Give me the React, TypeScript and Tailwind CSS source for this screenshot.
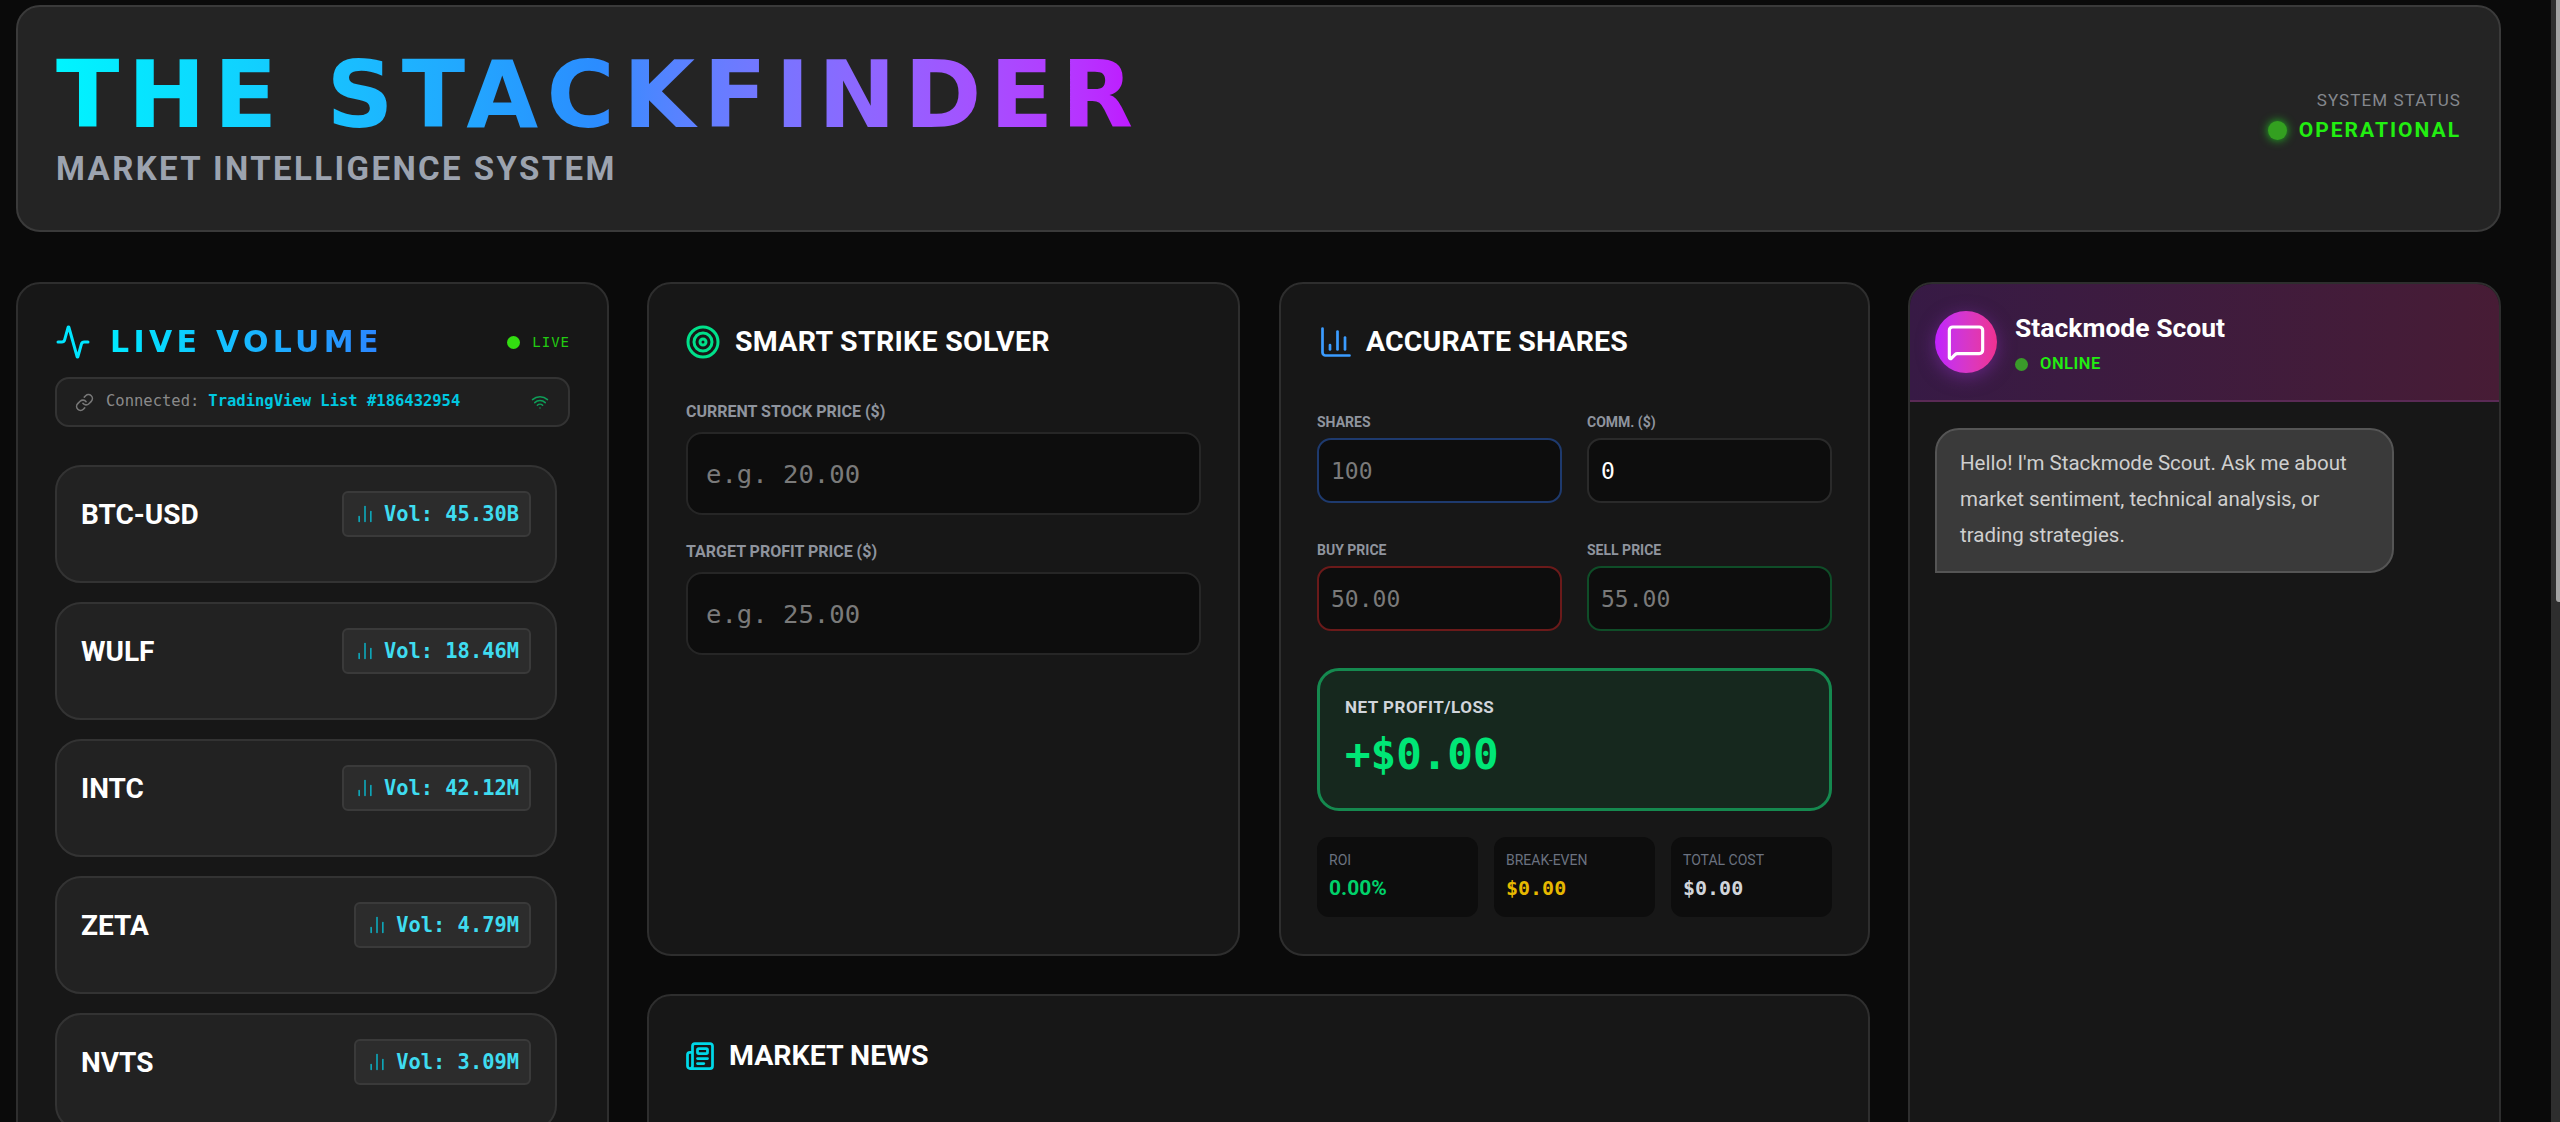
import { Activity, ChartColumn, ChartNoAxesColumn, Link, MessageSquare, Newspaper, Target, Wifi } from "lucide-react";

const stocks = [
  { symbol: "BTC-USD", vol: "45.30B" },
  { symbol: "WULF", vol: "18.46M" },
  { symbol: "INTC", vol: "42.12M" },
  { symbol: "ZETA", vol: "4.79M" },
  { symbol: "NVTS", vol: "3.09M" },
];

const sans = "font-['Roboto',sans-serif]";
const mono = "font-['DejaVu_Sans_Mono',monospace]";
const wide = "font-['DejaVu_Sans',sans-serif]";

function Field({ label, placeholder, value, border }: { label: string; placeholder?: string; value?: string; border: string }) {
  return (
    <div>
      <label className={`${sans} block text-[14px] leading-[17px] font-bold text-[#8f949e] mb-[7px]`}>{label}</label>
      <input
        readOnly
        placeholder={placeholder}
        value={value ?? ""}
        className={`${mono} w-full h-[65px] px-[12px] rounded-[14px] bg-[#0d0d0d] border-2 ${border} text-[23px] text-white placeholder:text-[#7a7a7a] outline-none`}
      />
    </div>
  );
}

function Stat({ label, value, color, font }: { label: string; value: string; color: string; font: string }) {
  return (
    <div className="rounded-[12px] bg-[#0d0d0d] px-[12px] pt-[14px] h-[80px]">
      <div className={`${sans} text-[14px] leading-[18px] text-[#6b7280]`}>{label}</div>
      <div className={`${font} mt-[7px] ${font === sans ? "text-[21px]" : "text-[20px]"} leading-[24px] font-bold ${color}`}>{value}</div>
    </div>
  );
}

export default function App() {
  return (
    <div className="flex h-screen overflow-hidden bg-[#0a0a0a]">
      <div className="flex-1 pl-[16px] pr-[50px] pt-[5px]">
        <header className="h-[227px] rounded-[24px] bg-[#242424] border-2 border-[#3a3a3a] pl-[38px] pr-[38px] pt-[33px] flex justify-between">
          <div>
            <h1 className={`${wide} text-[93px] leading-[110px] font-bold tracking-[8.3px] text-transparent bg-clip-text bg-gradient-to-r from-[#00f5ff] via-[#2b8cff] to-[#c010ff]`}>
              THE STACKFINDER
            </h1>
            <p className={`${sans} mt-[0px] text-[33px] leading-[38px] font-bold tracking-[2.4px] text-[#9ca3af]`}>MARKET INTELLIGENCE SYSTEM</p>
          </div>
          <div className="pt-[49px] text-right">
            <div className={`${sans} text-[17px] leading-[22px] tracking-[1.1px] text-[#85888e]`}>SYSTEM STATUS</div>
            <div className="mt-[7px] flex items-center justify-end gap-[12px]">
              <span className="w-[19px] h-[19px] rounded-full bg-[#33a020] shadow-[0_0_10px_#22c522]" />
              <span className={`${sans} text-[21px] leading-[24px] font-bold tracking-[2px] text-[#22ee11]`}>OPERATIONAL</span>
            </div>
          </div>
        </header>

        <div className="mt-[50px] grid grid-cols-[593px_1223px_593px] gap-[38px] items-start">
          <section className="rounded-[24px] bg-[#171717] border-2 border-[#2e2e2e] pl-[37px] pr-[37px] pt-[40px] h-[900px]">
            <div className="flex items-center justify-between h-[36px]">
              <div className="flex items-center gap-[19px]">
                <Activity size={36} strokeWidth={2} className="text-[#00e5ff]" />
                <h2 className={`${wide} text-[30px] leading-[36px] font-bold tracking-[4.3px] text-transparent bg-clip-text bg-gradient-to-r from-[#00eaff] to-[#2b84ff]`}>LIVE VOLUME</h2>
              </div>
              <div className="flex items-center gap-[12px]">
                <span className="w-[13px] h-[13px] rounded-full bg-[#33dd11]" />
                <span className={`${mono} text-[14px] tracking-[1px] text-[#22cc11]`}>LIVE</span>
              </div>
            </div>
            <div className={`${mono} mt-[17px] flex items-center h-[50px] rounded-[14px] bg-[#1f1f1f] border-2 border-[#333] pl-[18px] pr-[19px] text-[15.5px]`}>
              <Link size={19} className="text-[#777]" />
              <span className="ml-[12px] text-[#8a8a8a]">Connected:</span>
              <span className="ml-[9px] font-bold text-[#00c8e0]">TradingView List #186432954</span>
              <Wifi size={18} className="ml-auto text-[#0f9d58]" />
            </div>
            <div className="mt-[38px] mr-[13px] flex flex-col gap-[19px]">
              {stocks.map((s) => (
                <div key={s.symbol} className="h-[118px] rounded-[26px] bg-[#222] border-2 border-[#333] pl-[24px] pr-[24px] pt-[24px] flex items-start justify-between">
                  <span className={`${sans} text-[28px] leading-[48px] font-bold text-white`}>{s.symbol}</span>
                  <span className={`${mono} flex items-center h-[46px] rounded-[6px] bg-[#2c2c2c] border-2 border-[#3a3a3a] pl-[11px] pr-[10px] text-[20.4px] font-bold text-[#3fdcf0]`}>
                    <ChartNoAxesColumn size={20} className="text-[#0ea5b7] mr-[9px]" />
                    Vol: {s.vol}
                  </span>
                </div>
              ))}
            </div>
          </section>

          <div className="flex flex-col gap-[38px]">
            <div className="grid grid-cols-[593px_591px] gap-[39px]">
              <section className="h-[674px] rounded-[24px] bg-[#171717] border-2 border-[#2e2e2e] px-[37px] pt-[40px]">
                <div className="flex items-center gap-[14px] h-[36px]">
                  <Target size={36} strokeWidth={2} className="text-[#00e08a] -ml-[1px]" />
                  <h2 className={`${sans} text-[28.5px] font-bold tracking-[0.3px] text-white`}>SMART STRIKE SOLVER</h2>
                </div>
                <label className={`${sans} mt-[42px] block text-[16px] leading-[20px] font-bold text-[#8f949e]`}>CURRENT STOCK PRICE ($)</label>
                <input readOnly placeholder="e.g. 20.00" className={`${mono} mt-[10px] w-full h-[83px] px-[18px] rounded-[16px] bg-[#0d0d0d] border-2 border-[#262626] text-[25.6px] placeholder:text-[#7a7a7a] outline-none`} />
                <label className={`${sans} mt-[27px] block text-[16px] leading-[20px] font-bold text-[#8f949e]`}>TARGET PROFIT PRICE ($)</label>
                <input readOnly placeholder="e.g. 25.00" className={`${mono} mt-[10px] w-full h-[83px] px-[18px] rounded-[16px] bg-[#0d0d0d] border-2 border-[#262626] text-[25.6px] placeholder:text-[#7a7a7a] outline-none`} />
              </section>

              <section className="h-[674px] rounded-[24px] bg-[#171717] border-2 border-[#2e2e2e] px-[36px] pt-[40px]">
                <div className="flex items-center gap-[12px] h-[36px] ml-[2px]">
                  <ChartColumn size={36} strokeWidth={1.8} className="text-[#3b9cff] -ml-[1px]" />
                  <h2 className={`${sans} text-[28.5px] font-bold tracking-[0.1px] text-white`}>ACCURATE SHARES</h2>
                </div>
                <div className="mt-[54px] grid grid-cols-2 gap-x-[25px] gap-y-[39px]">
                  <Field label="SHARES" placeholder="100" border="border-[#1e3a6e]" />
                  <Field label="COMM. ($)" value="0" border="border-[#2a2a2a]" />
                  <Field label="BUY PRICE" placeholder="50.00" border="border-[#6b1a1a]" />
                  <Field label="SELL PRICE" placeholder="55.00" border="border-[#0f4d28]" />
                </div>
                <div className="mt-[37px] h-[143px] rounded-[22px] bg-[#16281e] border-[3px] border-[#15894f] pl-[25px] pt-[26px]">
                  <div className={`${sans} text-[17px] leading-[20px] font-bold tracking-[0.5px] text-[#d1d5db]`}>NET PROFIT/LOSS</div>
                  <div className={`${mono} mt-[13px] text-[42.5px] leading-[50px] font-bold text-[#00e676]`}>+$0.00</div>
                </div>
                <div className="mt-[26px] grid grid-cols-3 gap-[16px]">
                  <Stat label="ROI" value="0.00%" color="text-[#00d26a]" font={sans} />
                  <Stat label="BREAK-EVEN" value="$0.00" color="text-[#e6b800]" font={mono} />
                  <Stat label="TOTAL COST" value="$0.00" color="text-[#d1d5db]" font={mono} />
                </div>
              </section>
            </div>

            <section className="h-[400px] rounded-[24px] bg-[#171717] border-2 border-[#2e2e2e] px-[37px] pt-[45px]">
              <div className="flex items-center gap-[14px] h-[30px]">
                <Newspaper size={30} strokeWidth={2.2} className="text-[#00d8e8] -ml-[1px]" />
                <h2 className={`${sans} text-[28.5px] font-bold text-white`}>MARKET NEWS</h2>
              </div>
            </section>
          </div>

          <section className="h-[900px] rounded-[24px] bg-[#171717] border-2 border-[#2e2e2e] overflow-hidden">
            <div className="h-[118px] bg-gradient-to-r from-[#371a45] to-[#471c35] border-b-2 border-[#5a2a55] flex items-center pl-[25px] gap-[18px]">
              <div className="w-[62px] h-[62px] rounded-full bg-gradient-to-r from-[#c020ff] to-[#f03090] shadow-[0_4px_18px_#9030c080] flex items-center justify-center">
                <MessageSquare size={40} strokeWidth={1.9} className="text-white" />
              </div>
              <div>
                <div className={`${sans} text-[26.5px] leading-[32px] font-bold text-white mt-[1px]`}>Stackmode Scout</div>
                <div className="mt-[11px] flex items-center gap-[12px]">
                  <span className="w-[13px] h-[13px] rounded-full bg-[#3a9a2a]" />
                  <span className={`${sans} text-[16.5px] leading-[18px] font-semibold tracking-[0.5px] text-[#22ee11]`}>ONLINE</span>
                </div>
              </div>
            </div>
            <div className="pl-[25px] pt-[26px]">
              <div className={`${sans} w-[459px] h-[145px] rounded-[24px] rounded-bl-none bg-[#3a3a3a] border-2 border-[#555] px-[23px] pt-[15px] text-[20.5px] leading-[36px] text-[#cfcfcf]`}>
                Hello! I'm Stackmode Scout. Ask me about market sentiment, technical analysis, or trading strategies.
              </div>
            </div>
          </section>
        </div>
      </div>
      <div className="w-[9px] h-full bg-[#2e2e2e] shrink-0">
        <div className="h-[602px] ml-[5px] bg-[#a3a3a3] rounded-bl-[3px]" />
      </div>
    </div>
  );
}
